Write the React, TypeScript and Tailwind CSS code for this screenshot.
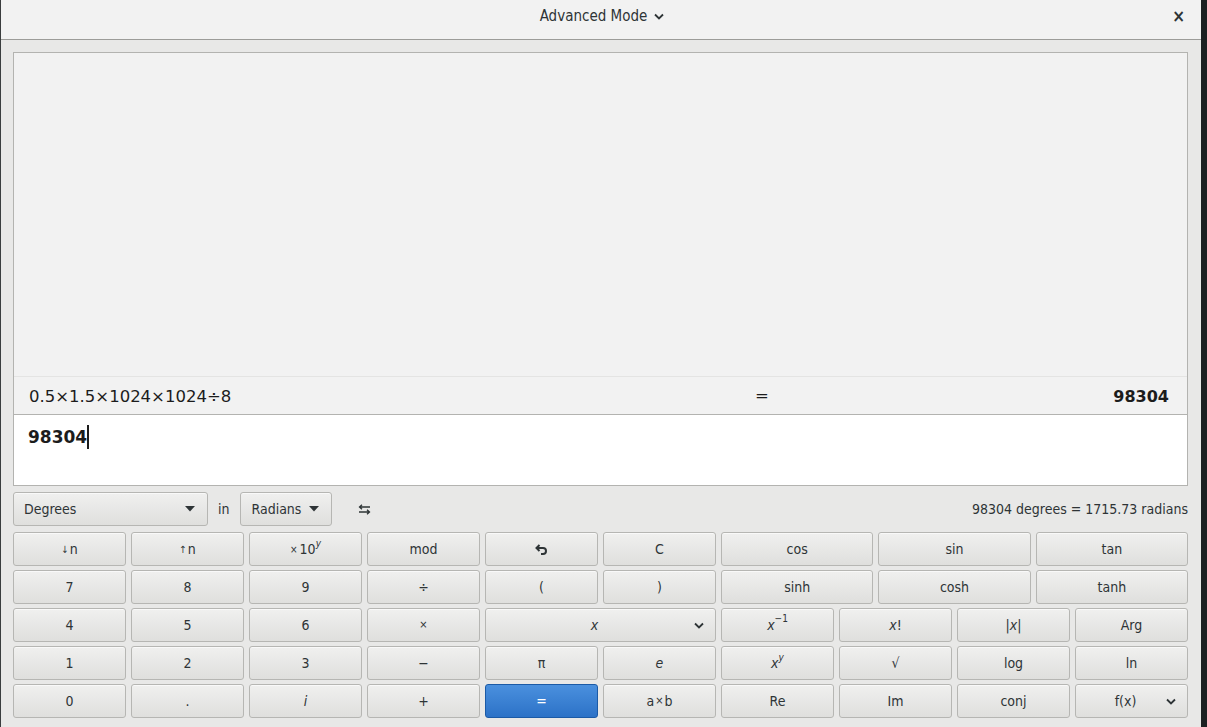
import React from "react";

const base =
  "h-[34px] flex items-center rounded-[3px] border border-[#b6b6b3] bg-gradient-to-b from-[#f0f0ef] to-[#dfdfdd] text-[14px] text-[#2e3436] shadow-[inset_0_1px_0_rgba(255,255,255,0.6)]";
const btn = `${base} justify-center`;

function Chevron({ className = "" }: { className?: string }) {
  return (
    <svg width="10" height="7" viewBox="0 0 10 7" className={className}>
      <path d="M1 1.5 L5 5.5 L9 1.5" fill="none" stroke="#2e3436" strokeWidth="1.8" />
    </svg>
  );
}

function Tri() {
  return (
    <svg width="10" height="6" viewBox="0 0 10 6">
      <path d="M0 0 L10 0 L5 5.5 Z" fill="#2e3436" />
    </svg>
  );
}

function B({ children, className = "" }: { children: React.ReactNode; className?: string }) {
  return <div className={`${btn} ${className}`}>{children}</div>;
}

function Undo() {
  return (
    <svg width="13" height="11" viewBox="0 0 13 11">
      <path d="M4.5 1 L1.5 4 L4.5 7" fill="none" stroke="#2e3436" strokeWidth="2" />
      <path d="M2 4 H8 Q11 4 11 7 Q11 10 8 10 H6" fill="none" stroke="#2e3436" strokeWidth="2" />
    </svg>
  );
}

function Swap() {
  return (
    <svg width="13" height="11" viewBox="0 0 13 11">
      <path d="M12 3 H2 M4 0.8 L1.5 3 L4 5.2" fill="none" stroke="#2e3436" strokeWidth="1.3" />
      <path d="M1 8 H11 M9 5.8 L11.5 8 L9 10.2" fill="none" stroke="#2e3436" strokeWidth="1.3" />
    </svg>
  );
}

export default function App() {
  const font = { fontFamily: '"DejaVu Sans Condensed", "DejaVu Sans", sans-serif' };
  return (
    <div className="flex w-[1207px] h-[727px] overflow-hidden" style={font}>
      <div className="w-[1201px] h-full flex flex-col bg-[#e8e8e7] border-l border-[#3a3d3e]">
        {/* Title bar */}
        <div className="h-[40px] shrink-0 bg-[#f2f2f2] border-b border-[#9c9c99] flex items-center relative pb-[7px]">
          <div className="flex-1 flex justify-center items-center gap-[7px] pl-[2px] text-[15px] text-[#2e3436]">
            <span>Advanced Mode</span>
            <Chevron />
          </div>
          <div className="absolute right-[16px] top-[4px] text-[17px] font-bold text-[#2e3436]">×</div>
        </div>

        <div className="flex-1 pl-[12px] pr-[13px] pt-[12px] flex flex-col">
          {/* display box */}
          <div className="h-[434px] border border-[#b3b3b0] flex flex-col">
            <div className="h-[324px] bg-[#f2f2f2] border-b border-[#e4e4e3]" />
            <div
              className="h-[38px] bg-[#f2f2f2] border-b border-[#b3b3b0] flex items-center px-[15px] pt-[3px] text-[16.5px] text-[#1c1c1c] relative"
              style={{ fontFamily: '"DejaVu Sans", sans-serif' }}
            >
              <span>0.5×1.5×1024×1024÷8</span>
              <span className="absolute left-[741px] top-[7px]">=</span>
              <span className="flex-1 text-right font-bold text-[16px] pr-[3px]">98304</span>
            </div>
            <div className="flex-1 bg-white px-[14px] pt-[10px]" style={{ fontFamily: '"DejaVu Sans", sans-serif' }}>
              <span className="text-[17px] font-bold text-[#1c1c1c]">98304</span>
              <span className="inline-block w-[2px] h-[24px] bg-[#1c1c1c] align-[-6px]" />
            </div>
          </div>

          {/* convert row */}
          <div className="mt-[6px] h-[34px] flex items-center text-[14px] text-[#2e3436]">
            <div className={`${base} w-[195px] justify-between pl-[10px] pr-[12px]`}>
              <span>Degrees</span>
              <Tri />
            </div>
            <span className="ml-[10px] mr-[11px]">in</span>
            <div className={`${base} w-[92px] justify-between pl-[10px] pr-[12px]`}>
              <span>Radians</span>
              <Tri />
            </div>
            <div className="ml-[26px]"><Swap /></div>
            <div className="flex-1 text-right">98304 degrees = 1715.73 radians</div>
          </div>

          {/* keypad */}
          <div className="mt-[6px] flex gap-[5px]">
            <div className="w-[703px] grid grid-cols-6 gap-x-[5px] gap-y-[4px]">
              <B><span className="text-[10px] mr-[1px]">↓</span>n</B>
              <B><span className="text-[10px] mr-[1px]">↑</span>n</B>
              <B><span className="text-[10px] mr-[2px]">×</span>10<sup className="italic text-[10px] -top-[5px]">y</sup></B>
              <B>mod</B>
              <B><Undo /></B>
              <B>C</B>

              <B>7</B><B>8</B><B>9</B><B>÷</B><B>(</B><B>)</B>

              <B>4</B><B>5</B><B>6</B><B><span className="text-[11px]">×</span></B>
              <div className={`${btn} col-span-2 relative`}>
                <span className="italic pr-[12px]">x</span>
                <Chevron className="absolute right-[11px] top-[13px]" />
              </div>

              <B>1</B><B>2</B><B>3</B><B>−</B><B>π</B><B><span className="italic">e</span></B>

              <B>0</B><B>.</B><B><span className="italic">i</span></B><B>+</B>
              <div className="h-[34px] flex items-center justify-center rounded-[3px] border border-[#1b5aa6] bg-gradient-to-b from-[#4a90de] to-[#2c72c7] text-[14px] text-white">=</div>
              <B>a<span className="text-[11px] mx-[1px]">×</span>b</B>
            </div>

            <div className="w-[467px] flex flex-col gap-[4px]">
              <div className="grid grid-cols-3 gap-[5px]">
                <B>cos</B><B>sin</B><B>tan</B>
              </div>
              <div className="grid grid-cols-3 gap-[5px]">
                <B>sinh</B><B>cosh</B><B>tanh</B>
              </div>
              <div className="grid grid-cols-4 gap-x-[5px] gap-y-[4px]">
                <B><span className="italic">x</span><sup className="text-[10px] -top-[6px]">−1</sup></B>
                <B><span className="italic">x</span>!</B>
                <B>|<span className="italic">x</span>|</B>
                <B>Arg</B>

                <B><span className="italic">x</span><sup className="italic text-[10px] -top-[5px]">y</sup></B>
                <B>√</B>
                <B>log</B>
                <B>ln</B>

                <B>Re</B>
                <B>Im</B>
                <B>conj</B>
                <div className={`${btn} relative`}>
                  <span className="pr-[12px]">f(x)</span>
                  <Chevron className="absolute right-[11px] top-[13px]" />
                </div>
              </div>
            </div>
          </div>
        </div>
      </div>
      <div className="w-[6px] h-full bg-[#1c2022]" />
    </div>
  );
}
